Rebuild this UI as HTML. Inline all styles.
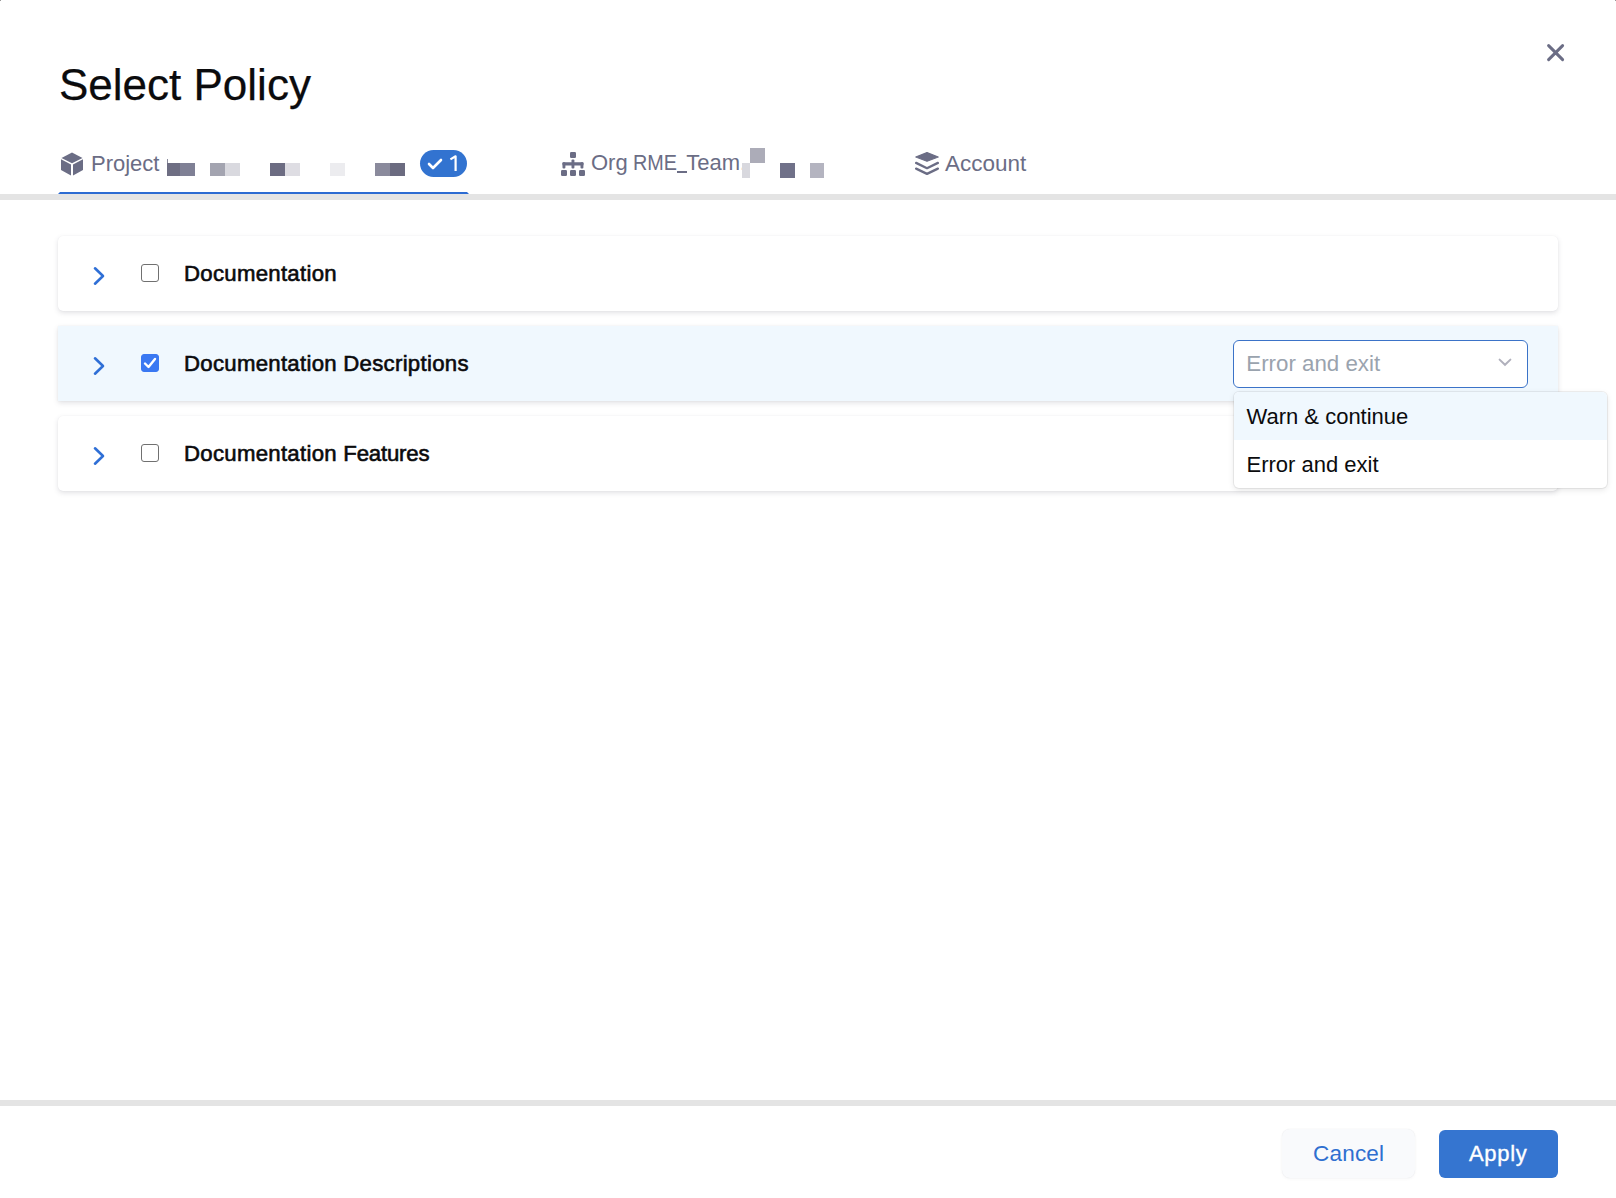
<!DOCTYPE html>
<html>
<head>
<meta charset="utf-8">
<style>
html,body{margin:0;padding:0;background:#fff;}
body{width:1616px;height:1198px;position:relative;overflow:hidden;font-family:"Liberation Sans",sans-serif;}
.a{position:absolute;white-space:nowrap;line-height:1;}
.title{left:59px;top:63px;font-size:44px;color:#0b0b0d;-webkit-text-stroke:0.25px #0b0b0d;}
.tabt{font-size:22px;color:#6b6d85;top:152.3px;}
.blk{position:absolute;}
.card{position:absolute;left:58px;width:1500px;height:75px;background:#fff;border-radius:5px;box-shadow:0 0 1px rgba(40,41,61,0.08),0 2px 5px rgba(96,97,112,0.18);}
.lbl{font-size:22.2px;font-weight:400;-webkit-text-stroke:0.6px #0b0b0d;color:#0b0b0d;letter-spacing:0.28px;}
.cb{position:absolute;left:141px;width:18px;height:18px;box-sizing:border-box;border:1.6px solid #707070;border-radius:3px;background:#fff;}
.chev{position:absolute;left:90px;}
.bar{position:absolute;left:0;width:1616px;height:6px;background:#e4e4e4;}
</style>
</head>
<body>
<div class="a title">Select Policy</div>

<!-- close -->
<svg class="blk" style="left:1543px;top:40px" width="26" height="26" viewBox="0 0 26 26">
  <path d="M5.6 5.6 L19.6 19.6 M19.6 5.6 L5.6 19.6" stroke="#6b6d85" stroke-width="3" stroke-linecap="round"/>
</svg>

<!-- tabs -->
<div class="bar" style="top:194px"></div>
<div class="blk" style="left:58px;top:192px;width:411px;height:2px;background:#2c6bd2;clip-path:polygon(2px 0,409px 0,411px 2px,0 2px)"></div>

<svg class="blk" style="left:60px;top:152px" width="24" height="24" viewBox="0 0 24 24">
  <path d="M12 0.5 L22.5 6 L12 11.2 L1.5 6 Z" fill="#6b6d85"/>
  <path d="M1 7.2 L11 12.4 L11 23.5 L1 18 Z" fill="#6b6d85"/>
  <path d="M23 7.2 L13 12.4 L13 23.5 L23 18 Z" fill="#6b6d85"/>
</svg>
<div class="a tabt" style="left:91px;top:152.8px">Project</div>
<div class="blk" style="left:167px;top:163px;width:13px;height:13px;background:#6e6e83"></div><div class="blk" style="left:167px;top:159px;width:1px;height:4px;background:#8a8b9c"></div>
<div class="blk" style="left:180px;top:163px;width:15px;height:13px;background:#7f8095"></div>
<div class="blk" style="left:210px;top:163px;width:15px;height:13px;background:#a3a4b0"></div>
<div class="blk" style="left:225px;top:163px;width:15px;height:13px;background:#d9d9df"></div>
<div class="blk" style="left:270px;top:163px;width:15px;height:13px;background:#6c6c82"></div>
<div class="blk" style="left:285px;top:163px;width:15px;height:13px;background:#dedde3"></div>
<div class="blk" style="left:330px;top:163px;width:15px;height:13px;background:#ececef"></div>
<div class="blk" style="left:375px;top:163px;width:15px;height:13px;background:#8a8a9c"></div>
<div class="blk" style="left:390px;top:163px;width:15px;height:13px;background:#6b6b80"></div>
<div class="blk" style="left:420px;top:150px;width:47px;height:27px;background:#3273d0;border-radius:14px"></div>
<svg class="blk" style="left:426px;top:156px" width="18" height="16" viewBox="0 0 18 16">
  <path d="M3 8 L7 12 L15 4" stroke="#fff" stroke-width="2.6" fill="none" stroke-linecap="round" stroke-linejoin="round"/>
</svg>
<svg class="blk" style="left:448px;top:153px" width="12" height="20" viewBox="0 0 12 20"><path d="M2.4 6.4 L7.6 3.3 L7.6 18" stroke="#fff" stroke-width="2.2" fill="none" stroke-linejoin="round"/></svg>

<svg class="blk" style="left:561px;top:152px" width="24" height="24" viewBox="0 0 24 24">
  <rect x="9" y="0" width="6" height="6" rx="1.2" fill="#6b6d85"/>
  <rect x="10.5" y="7.6" width="2.9" height="8.8" rx="1" fill="#6b6d85"/>
  <rect x="1.5" y="10.3" width="21" height="3.2" rx="0.8" fill="#6b6d85"/>
  <rect x="1.5" y="10.3" width="2.9" height="6.1" rx="1" fill="#6b6d85"/>
  <rect x="19.5" y="10.3" width="2.9" height="6.1" rx="1" fill="#6b6d85"/>
  <rect x="0" y="18" width="6" height="6" rx="1.2" fill="#6b6d85"/>
  <rect x="9" y="18" width="6" height="6" rx="1.2" fill="#6b6d85"/>
  <rect x="18" y="18" width="6" height="6" rx="1.2" fill="#6b6d85"/>
</svg>
<div class="a tabt" style="left:591px">Org</div><div class="a tabt" style="left:633.2px;transform:scaleX(0.9);transform-origin:0 0">RME</div><div class="blk" style="left:677.4px;top:171.2px;width:9.6px;height:1.9px;background:#6b6d85"></div><div class="a tabt" style="left:686.2px">Team.</div>
<div class="blk" style="left:742px;top:163px;width:8px;height:15px;background:#d8d8de"></div>
<div class="blk" style="left:750px;top:148px;width:15px;height:15px;background:#acacb8"></div>
<div class="blk" style="left:780px;top:163px;width:15px;height:15px;background:#707189"></div>
<div class="blk" style="left:810px;top:163px;width:14px;height:15px;background:#b4b4c0"></div>

<svg class="blk" style="left:915px;top:152px" width="24" height="24" viewBox="0 0 24 24">
  <path d="M12 0.6 L23.2 5 L12 9.3 L0.8 5 Z" fill="#6b6d85" stroke="#6b6d85" stroke-width="1.2" stroke-linejoin="round"/>
  <path d="M1.1 10.9 L12 16.2 L22.9 10.9" stroke="#6b6d85" stroke-width="2.3" fill="none" stroke-linecap="round" stroke-linejoin="round"/>
  <path d="M1.1 16.6 L12 21.9 L22.9 16.6" stroke="#6b6d85" stroke-width="2.3" fill="none" stroke-linecap="round" stroke-linejoin="round"/>
</svg>
<div class="a tabt" style="left:945px;font-size:22.5px;top:152.9px">Account</div>

<!-- cards -->
<div class="card" style="top:236px"></div>
<div class="card" style="top:326px;background:#f0f8fe;border-radius:0"></div>
<div class="card" style="top:416px"></div>

<svg class="chev" style="top:264px" width="20" height="24" viewBox="0 0 20 24">
  <path d="M5 4.3 L13 12 L5 19.7" stroke="#2f6fd6" stroke-width="2.6" fill="none" stroke-linecap="round" stroke-linejoin="round"/>
</svg>
<svg class="chev" style="top:354px" width="20" height="24" viewBox="0 0 20 24">
  <path d="M5 4.3 L13 12 L5 19.7" stroke="#2f6fd6" stroke-width="2.6" fill="none" stroke-linecap="round" stroke-linejoin="round"/>
</svg>
<svg class="chev" style="top:444px" width="20" height="24" viewBox="0 0 20 24">
  <path d="M5 4.3 L13 12 L5 19.7" stroke="#2f6fd6" stroke-width="2.6" fill="none" stroke-linecap="round" stroke-linejoin="round"/>
</svg>

<div class="cb" style="top:264px"></div>
<div class="cb" style="top:354px;background:#3a78f2;border-color:#3a78f2"></div>
<svg class="blk" style="left:141px;top:354px" width="18" height="18" viewBox="0 0 18 18">
  <path d="M4 9.5 L7.5 13 L14 5" stroke="#fff" stroke-width="2.4" fill="none" stroke-linecap="round" stroke-linejoin="round"/>
</svg>
<div class="cb" style="top:444px"></div>

<div class="a lbl" style="left:184px;top:263px">Documentation</div>
<div class="a lbl" style="left:184px;top:353px">Documentation Descriptions</div>
<div class="a lbl" style="left:184px;top:443px">Documentation <span style="letter-spacing:-0.2px">Features</span></div>

<!-- select -->
<div class="blk" style="left:1233px;top:340px;width:293px;height:46px;border:1.2px solid #3b73c8;border-radius:6px;background:#fff"></div>
<div class="a" style="left:1246.3px;top:352.6px;font-size:22.3px;color:#9aa3ae">Error and exit</div>
<svg class="blk" style="left:1496px;top:355px" width="18" height="14" viewBox="0 0 18 14">
  <path d="M3.6 4.6 L9 9.8 L14.4 4.6" stroke="#b0b0bc" stroke-width="2" fill="none" stroke-linecap="round"/>
</svg>

<!-- menu -->
<div class="blk" style="left:1234px;top:392px;width:373px;height:96px;background:#fff;border-radius:5px;box-shadow:0 0 0 1px rgba(0,0,0,0.06),0 2px 6px rgba(0,0,0,0.10);overflow:hidden">
  <div style="height:48px;background:#f0f8fe"></div>
</div>
<div class="a" style="left:1246.5px;top:406px;font-size:22px;color:#0b0b0d">Warn &amp; continue</div>
<div class="a" style="left:1246.5px;top:454px;font-size:22px;color:#0b0b0d">Error and exit</div>

<!-- footer -->
<div class="bar" style="top:1100px"></div>
<div class="blk" style="left:1282px;top:1129px;width:133px;height:49px;background:#f9fafc;border-radius:8px;box-shadow:0 0 1px rgba(40,41,61,0.10),0 1px 3px rgba(96,97,112,0.06)"></div>
<div class="a" style="left:1313px;top:1143px;font-size:22.5px;color:#2f6fd0;letter-spacing:0.2px">Cancel</div>
<div class="blk" style="left:1439px;top:1130px;width:119px;height:48px;background:#3575d0;border-radius:6px"></div>
<div class="a" style="left:1469px;top:1142.9px;font-size:22px;letter-spacing:0.7px;color:#fff;-webkit-text-stroke:0.35px #fff">Apply</div>
<div class="blk" style="left:0;top:0;width:1px;height:1px;background:#999"></div><div class="blk" style="left:1615px;top:0;width:1px;height:1px;background:#999"></div>
</body>
</html>
